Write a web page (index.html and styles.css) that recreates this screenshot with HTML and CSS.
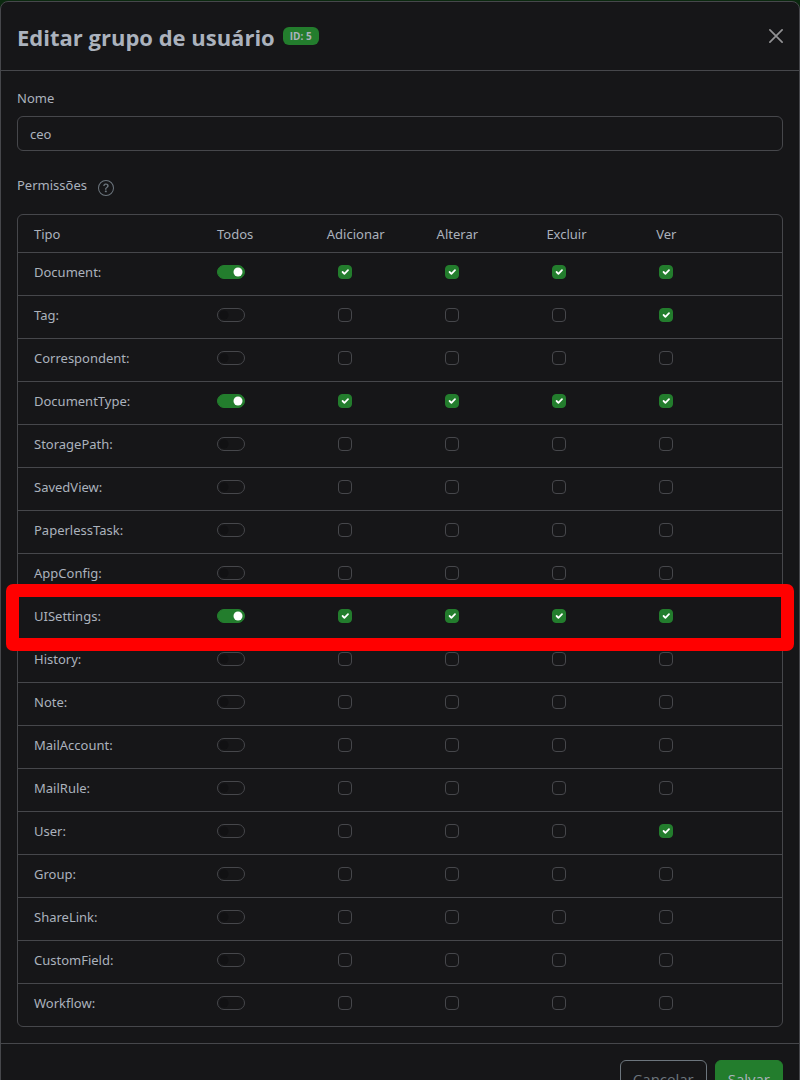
FILE: index.html
```html
<!DOCTYPE html>
<html lang="pt-BR">
<head>
<meta charset="utf-8">
<meta name="viewport" content="width=device-width, initial-scale=1">
<title>Editar grupo de usuário</title>
<link rel="stylesheet" href="styles.css">
</head>
<body>
<form class="modal" role="dialog" aria-labelledby="modal-title">
  <header class="modal-header">
    <h1 class="modal-title" id="modal-title">Editar grupo de usuário</h1>
    <span class="badge">ID: 5</span>
    <button class="close" type="button" aria-label="Fechar">
      <svg width="14" height="14" viewBox="0 0 14 14" fill="none" stroke="currentColor" stroke-width="1.7" stroke-linecap="round"><path d="M.9.9l12.2 12.2M13.1.9L.9 13.1"/></svg>
    </button>
  </header>
  <div class="modal-body">
    <label class="label" for="name">Nome</label>
    <input class="text-input" id="name" type="text" value="ceo">
    <div class="permissions-label">
      <span id="permissions">Permissões</span>
      <button class="help" type="button" aria-label="Ajuda">
        <svg width="16" height="16" viewBox="0 0 16 16" fill="currentColor"><path d="M8 15A7 7 0 1 1 8 1a7 7 0 0 1 0 14m0 1A8 8 0 1 0 8 0a8 8 0 0 0 0 16"/><path d="M5.255 5.786a.237.237 0 0 0 .241.247h.825c.138 0 .248-.113.266-.25.09-.656.54-1.134 1.342-1.134.686 0 1.314.343 1.314 1.168 0 .635-.374.927-.965 1.371-.673.489-1.206 1.06-1.168 1.987l.003.217a.25.25 0 0 0 .25.246h.811a.25.25 0 0 0 .25-.25v-.105c0-.718.273-.927 1.01-1.486.609-.463 1.244-.977 1.244-2.056 0-1.511-1.276-2.241-2.673-2.241-1.267 0-2.655.59-2.75 2.286m1.557 5.763c0 .533.425.927 1.01.927.609 0 1.028-.394 1.028-.927 0-.552-.42-.94-1.029-.94-.584 0-1.009.388-1.009.94"/></svg>
      </button>
    </div>
    <table class="permissions" aria-labelledby="permissions">
      <thead>
        <tr><th scope="col">Tipo</th><th scope="col">Todos</th><th scope="col">Adicionar</th><th scope="col">Alterar</th><th scope="col">Excluir</th><th scope="col">Ver</th></tr>
      </thead>
      <tbody id="rows"></tbody>
    </table>
  </div>
  <footer class="modal-footer">
    <button class="button button-outline" type="button">Cancelar</button>
    <button class="button button-primary" type="submit">Salvar</button>
  </footer>
</form>
<script src="script.js"></script>
</body>
</html>
```
FILE: styles.css
```css
:root {
  --surface: #161618;
  --line: #46474b;
  --text: #abb2bd;
  --muted: #6c757d;
  --primary: #237d2d;
}

* { box-sizing: border-box; }

body {
  height: 100vh;
  margin: 0;
  padding-top: 1px;
  overflow: hidden;
  background: #0b290f;
  color: var(--text);
  font: 13px/23px "Noto Sans", "Open Sans", sans-serif;
}

button, input { margin: 0; font: inherit; color: inherit; }
button { cursor: pointer; }
svg { display: block; }

.modal {
  display: flex;
  flex-direction: column;
  background: var(--surface);
  border: 1px solid var(--line);
  border-radius: 8px;
}

.modal-header {
  display: flex;
  align-items: center;
  gap: 8px;
  padding: 17px 16px 15px;
  border-bottom: 1px solid var(--line);
}

.modal-title {
  margin: 0;
  font-family: "Open Sans", "Noto Sans", sans-serif;
  font-size: 22px;
  line-height: 36px;
  font-weight: 700;
}

.badge {
  padding: 0 7px;
  margin-bottom: 2px;
  border-radius: 6px;
  background: var(--primary);
  font-family: "Open Sans", "Noto Sans", sans-serif;
  font-size: 10px;
  line-height: 18px;
  font-weight: 700;
}

.close {
  margin: 0 0 2px auto;
  padding: 0;
  border: 0;
  background: none;
  color: #929294;
}

.modal-body { padding: 16px; }

.label { display: block; margin-bottom: 6px; }

.text-input {
  display: block;
  width: 100%;
  height: 35px;
  padding: 5px 12px;
  border: 1px solid var(--line);
  border-radius: 6px;
  background: transparent;
}

.permissions-label {
  display: flex;
  align-items: flex-start;
  gap: 11px;
  margin: 23px 0 17px;
}

.help {
  margin-top: 6px;
  padding: 0;
  border: 0;
  background: none;
  color: var(--muted);
}

.permissions {
  display: block;
  border: 1px solid var(--line);
  border-radius: 6px;
}

.permissions thead, .permissions tbody { display: block; }

.permissions tr {
  display: grid;
  align-items: start;
  padding: 8px 16px 6px;
  border-bottom: 1px solid var(--line);
}

.permissions thead tr { grid-template-columns: 25fr repeat(5, 15fr); }

.permissions tbody tr {
  position: relative;
  grid-template-columns: 250fr 165fr repeat(4, 146fr);
  padding-bottom: 11px;
}

.permissions tbody tr:last-child { border-bottom: 0; }

.permissions th, .permissions td {
  min-width: 0;
  padding: 0;
  font-weight: 400;
  text-align: left;
}

.permissions input {
  display: block;
  width: 14px;
  height: 14px;
  margin-top: 4px;
  appearance: none;
  border: 1px solid var(--line);
  border-radius: 4px;
  background: center / contain no-repeat;
}

.permissions input:checked {
  border-color: var(--primary);
  background-color: var(--primary);
  background-image: url("data:image/svg+xml,%3Csvg xmlns='http://www.w3.org/2000/svg' viewBox='0 0 20 20'%3E%3Cpath fill='none' stroke='%23fff' stroke-linecap='round' stroke-linejoin='round' stroke-width='3' d='m6 10 3 3 6-6'/%3E%3C/svg%3E");
}

.permissions .switch {
  width: 28px;
  border-radius: 7px;
  background-position: left center;
  background-image: url("data:image/svg+xml,%3Csvg xmlns='http://www.w3.org/2000/svg' viewBox='-4 -4 8 8'%3E%3Ccircle r='3' fill='%23111113'/%3E%3C/svg%3E");
}

.permissions .switch:checked {
  background-position: right center;
  background-image: url("data:image/svg+xml,%3Csvg xmlns='http://www.w3.org/2000/svg' viewBox='-4 -4 8 8'%3E%3Ccircle r='3' fill='%23fff'/%3E%3C/svg%3E");
}

/* Annotation frame drawn over the neighbouring rows */
.permissions .highlight::after {
  content: "";
  position: absolute;
  z-index: 1;
  inset: -13px -12px -12px;
  border: 13px solid #f00;
  border-radius: 7px;
  pointer-events: none;
}

.modal-footer {
  display: flex;
  justify-content: flex-end;
  gap: 8px;
  padding: 16px;
  border-top: 1px solid var(--line);
}

.button {
  padding: 6px 12px;
  border: 1px solid var(--primary);
  border-radius: 6px;
  font-family: "Open Sans", "Noto Sans", sans-serif;
  font-size: 15px;
  line-height: 24px;
}

.button-outline { border-color: var(--muted); background: none; color: var(--muted); }
.button-primary { background: var(--primary); }
```
FILE: script.js
```js
const actions = ["Adicionar", "Alterar", "Excluir", "Ver"];
const types = [
  ["Document", "1111"], ["Tag", "0001"], ["Correspondent", "0000"],
  ["DocumentType", "1111"], ["StoragePath", "0000"], ["SavedView", "0000"],
  ["PaperlessTask", "0000"], ["AppConfig", "0000"], ["UISettings", "1111"],
  ["History", "0000"], ["Note", "0000"], ["MailAccount", "0000"],
  ["MailRule", "0000"], ["User", "0001"], ["Group", "0000"],
  ["ShareLink", "0000"], ["CustomField", "0000"], ["Workflow", "0000"]
];

document.getElementById("rows").innerHTML = types.map(([type, flags]) => {
  const box = (label, on, extra) =>
    `<td><input type="checkbox" ${extra} aria-label="${type}: ${label}" ${on ? "checked" : ""}></td>`;
  return `<tr class="${type === "UISettings" ? "highlight" : ""}">
    <th scope="row">${type}:</th>
    ${box("Todos", flags === "1111", 'class="switch" role="switch"')}
    ${actions.map((action, i) => box(action, flags[i] === "1", "")).join("")}
  </tr>`;
}).join("");
```
